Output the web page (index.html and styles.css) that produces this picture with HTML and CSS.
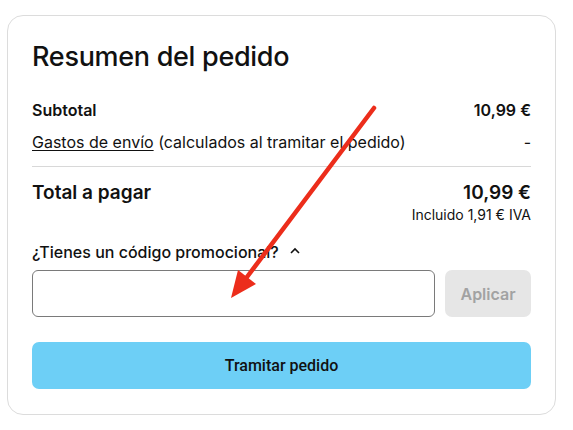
FILE: index.html
```html
<!DOCTYPE html>
<html lang="es">
<head>
<meta charset="utf-8">
<link rel="stylesheet" href="styles.css">
</head>
<body>
<div class="card">
  <h1 class="title">Resumen del pedido</h1>
  <div class="row row-sub">
    <span class="strong">Subtotal</span>
    <span class="strong">10,99 €</span>
  </div>
  <div class="row row-ship">
    <span><a class="link" href="#">Gastos de envío</a> (calculados al tramitar el pedido)</span>
    <span>-</span>
  </div>
  <div class="divider"></div>
  <div class="row row-total">
    <span>Total a pagar</span>
    <span>10,99 €</span>
  </div>
  <div class="tax">Incluido 1,91 € IVA</div>
  <div class="promo-toggle">
    <span>¿Tienes un código promocional?</span>
    <svg class="chev" width="12" height="8" viewBox="0 0 12 8"><path d="M2 6 L6 2 L10 6" fill="none" stroke="#111" stroke-width="1.6"/></svg>
  </div>
  <div class="promo">
    <input class="promo-input" type="text">
    <button class="btn-apply">Aplicar</button>
  </div>
  <button class="btn-checkout">Tramitar pedido</button>
</div>
<svg class="arrow" width="573" height="430" viewBox="0 0 573 430">
  <line x1="374" y1="108" x2="244" y2="281" stroke="#ec2d1b" stroke-width="4.5" stroke-linecap="round"/>
  <polygon points="231,298 238,270 256,284" fill="#ec2d1b"/>
</svg>
</body>
</html>
```
FILE: styles.css
```css
* { box-sizing: border-box; }
html, body { margin: 0; padding: 0; background: #fff; }
body {
  font-family: Inter, "Noto Sans", sans-serif;
  color: #111;
  width: 573px;
  height: 430px;
  padding: 15px 17px 0 7px;
  overflow: hidden;
}
.card {
  border: 1px solid #dcdcdc;
  border-radius: 16px;
  height: 400px;
  padding: 25px 24px 0 24px;
  display: flex;
  flex-direction: column;
}
.title {
  margin: 0;
  font-size: 27px;
  line-height: 32px;
  font-weight: 500;
  letter-spacing: -0.3px;
}
.row {
  display: flex;
  justify-content: space-between;
  align-items: baseline;
}
.row-sub {
  margin-top: 27px;
  font-size: 16px;
  line-height: 20px;
}
.strong { font-weight: 600; }
.row-ship {
  margin-top: 12px;
  font-size: 16px;
  line-height: 20px;
}
.link { color: #111; text-decoration: underline; text-underline-offset: 2px; }
.divider {
  height: 1px;
  background: #d8d8d8;
  margin-top: 14px;
}
.row-total {
  margin-top: 14px;
  font-size: 19px;
  line-height: 24px;
  font-weight: 600;
}
.tax {
  text-align: right;
  font-size: 14px;
  line-height: 18px;
  margin-top: 1px;
}
.promo-toggle {
  margin-top: 18px;
  font-size: 16px;
  line-height: 20px;
  font-weight: 500;
  display: flex;
  align-items: center;
  gap: 10px;
}
.chev { display: block; margin-top: -2px; }
.promo {
  margin-top: 8px;
  display: flex;
  gap: 10px;
  height: 47px;
}
.promo-input {
  flex: 1;
  height: 47px;
  border: 1px solid #7a7a7a;
  border-radius: 6px;
  background: #fff;
  outline: none;
  font: inherit;
}
.btn-apply {
  width: 86px;
  height: 47px;
  border: none;
  border-radius: 7px;
  background: #e6e6e6;
  color: #a2a2a2;
  font-family: Inter, sans-serif;
  font-weight: 600;
  font-size: 16px;
}
.btn-checkout {
  margin-top: 25px;
  height: 47px;
  border: none;
  border-radius: 7px;
  background: #6dcff6;
  color: #111;
  font-family: Roboto, sans-serif;
  font-weight: 500;
  font-size: 16px;
}
.arrow {
  position: absolute;
  left: 0;
  top: 0;
  pointer-events: none;
}
```
